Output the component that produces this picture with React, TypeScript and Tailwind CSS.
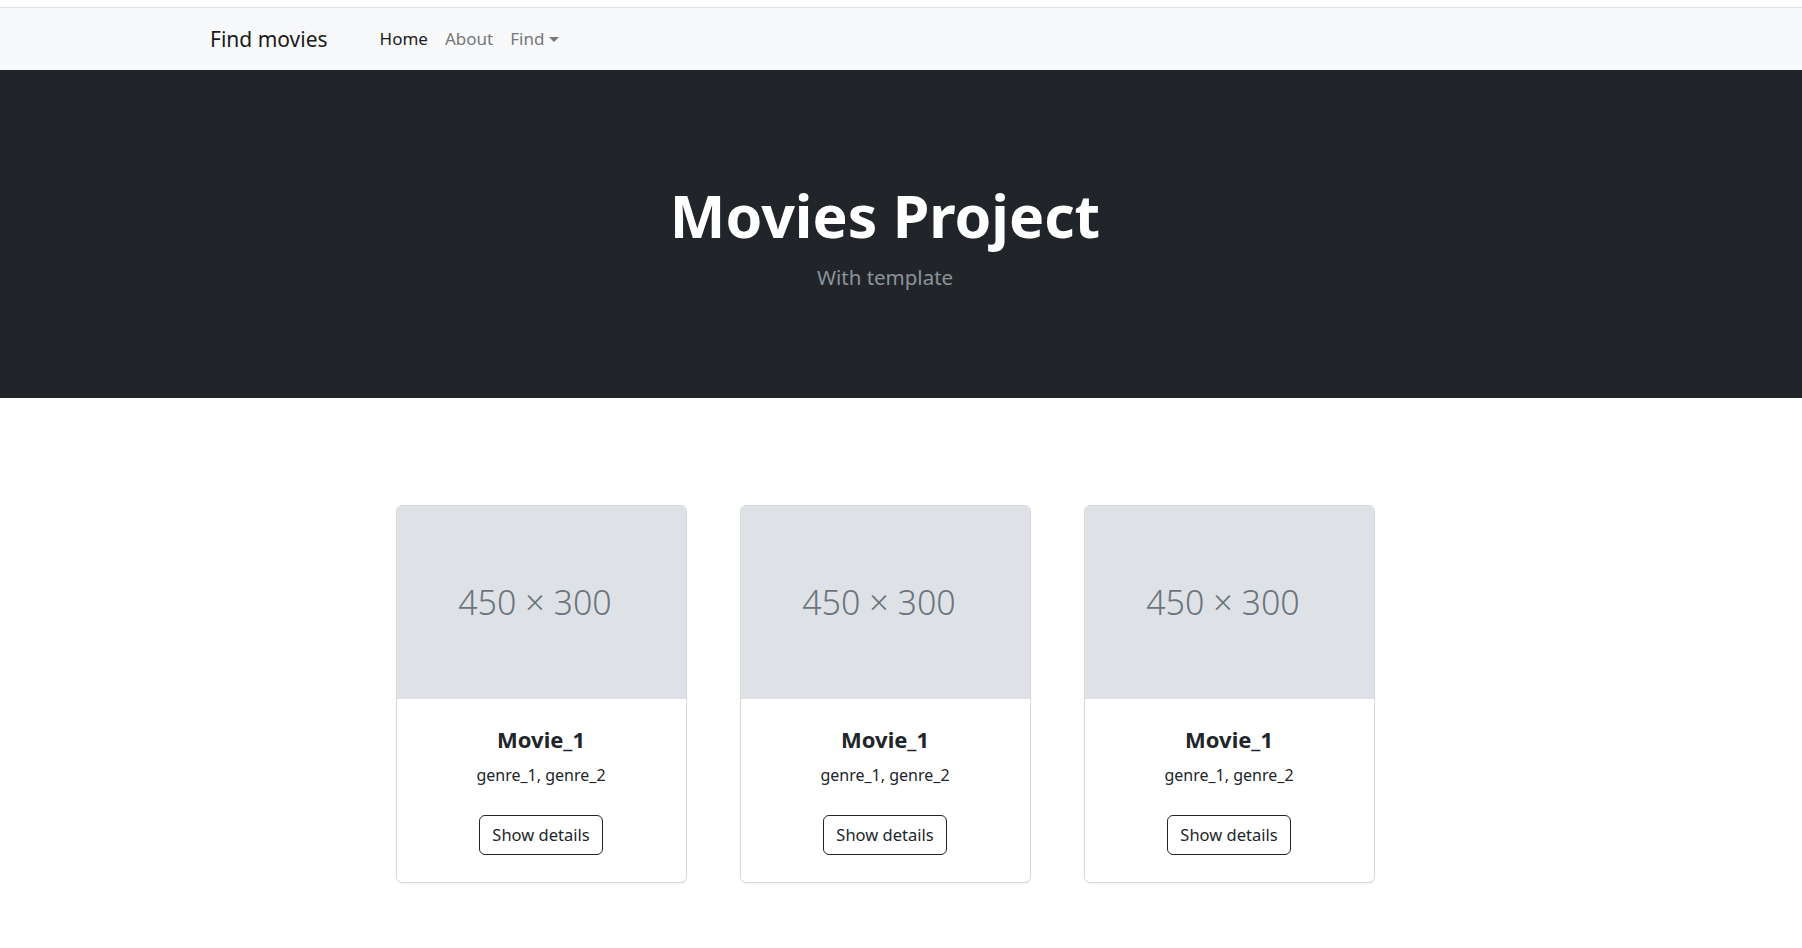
import React from "react";

interface Movie {
  title: string;
  genres: string;
}

const movies: Movie[] = [
  { title: "Movie_1", genres: "genre_1, genre_2" },
  { title: "Movie_1", genres: "genre_1, genre_2" },
  { title: "Movie_1", genres: "genre_1, genre_2" },
];

const MovieCard = ({ movie }: { movie: Movie }) => {
  return (
    <div className="w-[291px] bg-white border border-[#d6d8da] rounded-[6px] overflow-hidden shadow-[0_1px_2px_rgba(0,0,0,0.06)]">
      <div className="h-[193px] bg-[#dee2e6] flex items-center justify-center">
        <span className="text-[34px] font-light text-[#6c757d] pr-[12px]">450 × 300</span>
      </div>
      <div className="flex flex-col items-center pt-[27px] pb-[27px]">
        <h5 className="text-[22px] leading-[26px] font-bold text-[#212529]">{movie.title}</h5>
        <p className="mt-[11px] text-[16px] leading-[24px] text-[#212529]">{movie.genres}</p>
        <button className="mt-[28px] h-[40px] px-[12px] border border-[#212529] rounded-[6px] text-[16.5px] text-[#212529] bg-white">
          Show details
        </button>
      </div>
    </div>
  );
};

const App = () => {
  return (
    <div className="min-h-screen bg-white font-['Noto_Sans',sans-serif] pt-[7px]">
      <nav className="h-[63px] bg-[#f8f9fa] border-t border-[#dee2e6] flex items-center">
        <div className="flex items-center pl-[210px]">
          <a className="text-[21px] leading-[30px] text-[#1a1a1a]">Find movies</a>
          <ul className="flex items-center ml-[52px] gap-[17px] text-[17px] leading-[24px]">
            <li className="text-[#1a1a1a]">Home</li>
            <li className="text-[#767676]">About</li>
            <li className="text-[#767676] flex items-center">
              Find
              <span className="ml-[5px] w-0 h-0 border-t-[5px] border-t-[#767676] border-x-[5px] border-x-transparent"></span>
            </li>
          </ul>
        </div>
      </nav>

      <section className="bg-[#212529] h-[328px]">
        <div className="w-[1770px] flex flex-col items-center pt-[112px]">
          <h1 className="text-[59px] leading-[67px] font-bold text-white">Movies Project</h1>
          <p className="mt-[13px] text-[20.5px] leading-[30px] text-[#8c939a]">With template</p>
        </div>
      </section>

      <main className="w-[1770px] flex justify-center gap-[53px] pt-[107px] pb-[60px]">
        {movies.map((m, i) => (
          <MovieCard key={i} movie={m} />
        ))}
      </main>
    </div>
  );
};

export default App;
